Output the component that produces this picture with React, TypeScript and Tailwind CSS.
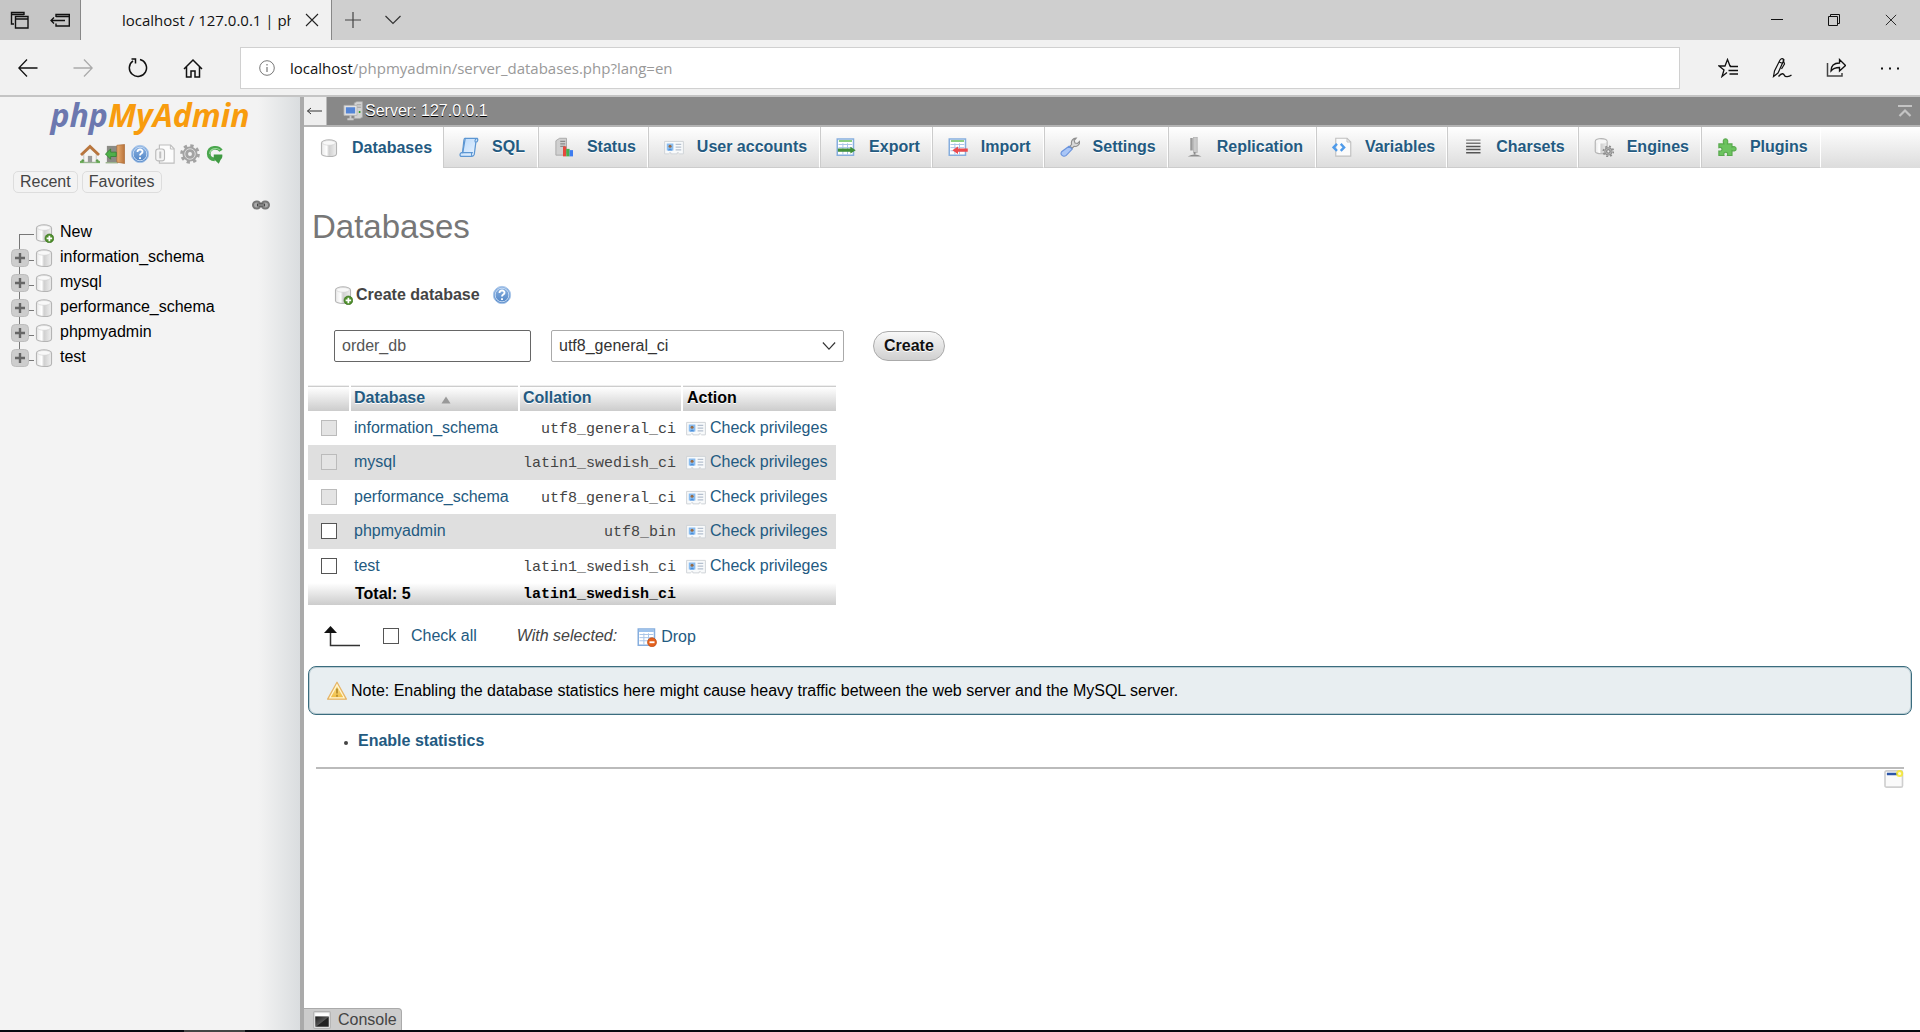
import React, { useState } from "react";

type IconProps = { className?: string };

function Svg({ className = "size-5", children, box = "0 0 16 16" }: { className?: string; children: React.ReactNode; box?: string }) {
  return (
    <svg viewBox={box} className={`${className} shrink-0`} fill="none" aria-hidden="true">
      {children}
    </svg>
  );
}

/* ---------- shared gradients ---------- */

function Gradients() {
  return (
    <svg className="absolute size-0" aria-hidden="true">
      <defs>
        <linearGradient id="cyl" x1="0" x2="1" y1="0" y2="0">
          <stop offset="0" stopColor="#e8e8e8" />
          <stop offset="0.35" stopColor="#ffffff" />
          <stop offset="0.5" stopColor="#cfcfcf" />
          <stop offset="0.7" stopColor="#dcdcdc" />
          <stop offset="1" stopColor="#f0f0f0" />
        </linearGradient>
        <linearGradient id="help" x1="0" x2="0" y1="0" y2="1">
          <stop offset="0" stopColor="#8fb5e3" />
          <stop offset="1" stopColor="#4d82c4" />
        </linearGradient>
        <linearGradient id="door" x1="0" x2="1" y1="0" y2="0">
          <stop offset="0" stopColor="#e9ad72" />
          <stop offset="1" stopColor="#b8733a" />
        </linearGradient>
        <linearGradient id="warn" x1="0" x2="0" y1="0" y2="1">
          <stop offset="0" stopColor="#fbe9a0" />
          <stop offset="1" stopColor="#f0b93a" />
        </linearGradient>
        <linearGradient id="scroll" x1="0" x2="1" y1="0" y2="1">
          <stop offset="0" stopColor="#b9d9fb" />
          <stop offset="1" stopColor="#eaf4ff" />
        </linearGradient>
        <linearGradient id="term" x1="0" x2="1" y1="0" y2="1">
          <stop offset="0" stopColor="#1c1c1c" />
          <stop offset="0.5" stopColor="#555555" />
          <stop offset="0.55" stopColor="#222222" />
          <stop offset="1" stopColor="#222222" />
        </linearGradient>
      </defs>
    </svg>
  );
}

/* ---------- browser icons ---------- */

const TabsAsideIcon = () => (
  <Svg className="size-5" box="0 0 20 20">
    <path d="M4 14H1.5V2.5H14V5M1.5 4.5H14" stroke="#111" strokeWidth="1.4" />
    <path d="M5.5 6.5H18V18H5.5ZM5.5 9H18" stroke="#111" strokeWidth="1.4" />
  </Svg>
);
const SetAsideIcon = () => (
  <Svg className="size-5" box="0 0 20 20">
    <path d="M6 7V4.500H19.300V16H6V13.500M6 6.500H19.300" stroke="#111" strokeWidth="1.4" />
    <path d="M15 10.500H1M4 7.500L1 10.500L4 13.500" stroke="#111" strokeWidth="1.3" />
  </Svg>
);
const CloseIcon = ({ className = "size-3.5" }: IconProps) => (
  <Svg className={className} box="0 0 14 14">
    <path d="M1 1L13 13M13 1L1 13" stroke="#222" strokeWidth="1.1" />
  </Svg>
);
const PlusIcon = () => (
  <Svg className="size-4">
    <path d="M8 0V16M0 8H16" stroke="#444" strokeWidth="1.2" />
  </Svg>
);
const ChevronIcon = () => (
  <Svg className="size-4">
    <path d="M0.500 4L8 11.500L15.500 4" stroke="#333" strokeWidth="1.2" />
  </Svg>
);
const ArrowLeft = () => (
  <Svg box="0 0 20 20">
    <path d="M19.500 10H1M9 1.500L0.800 10L9 18.500" stroke="#111" strokeWidth="1.3" />
  </Svg>
);
const ArrowRight = () => (
  <Svg box="0 0 20 20">
    <path d="M0.500 10H19M11 1.500L19.200 10L11 18.500" stroke="#aaa" strokeWidth="1.3" />
  </Svg>
);
const ReloadIcon = () => (
  <Svg box="0 0 20 20">
    <path d="M12 1.500A8.600 8.600 0 1 1 5 2.800" stroke="#111" strokeWidth="1.5" />
    <path d="M3.500 1H7.500V5.500" stroke="#111" strokeWidth="1.5" />
  </Svg>
);
const HomeIcon = () => (
  <Svg box="0 0 20 20">
    <path d="M1 11L10 2L19 11M3.500 9V19H8V13H12V19H16.500V9" stroke="#111" strokeWidth="1.5" />
  </Svg>
);
const InfoIcon = () => (
  <Svg className="size-4">
    <circle cx="8" cy="8" r="7.300" stroke="#777" strokeWidth="1" />
    <path d="M8 7V12M8 4V5.500" stroke="#777" strokeWidth="1.2" />
  </Svg>
);
const FavoritesIcon = () => (
  <Svg box="0 0 20 20">
    <path d="M13 8H12L9.500 1.500L7 8H1L6 12L4 18.500L9 14.500" stroke="#111" strokeWidth="1.3" />
    <path d="M12 8.500H20M10.500 12.500H20M11.500 16H20" stroke="#111" strokeWidth="1.3" />
  </Svg>
);
const PenIcon = () => (
  <Svg box="0 0 20 20">
    <path d="M1.500 18.500L2.500 13L8 2Q10-.5 12 1.800L6 15ZM7 4L11 5.500M11 1.500L12.500 6L9.500 11" stroke="#111" strokeWidth="1.2" />
    <path d="M6.500 18.500C10 14 12 16 12.500 17.500S17 19 19.500 17" stroke="#111" strokeWidth="1.3" />
  </Svg>
);
const ShareIcon = () => (
  <Svg box="0 0 20 20">
    <path d="M1.500 5V18H16V15" stroke="#444" strokeWidth="1.5" />
    <path d="M5 13C5 8 8 5 13.500 5V1.500L19.500 7.500L13.500 13V9.500C10 9.500 7 10.500 5 13Z" stroke="#111" strokeWidth="1.3" />
  </Svg>
);
const DotsIcon = () => (
  <Svg box="0 0 20 20">
    <path d="M1 9.500h2v2h-2zM9 9.500h2v2h-2zM17 9.500h2v2h-2z" fill="#111" />
  </Svg>
);

/* ---------- phpMyAdmin icons ---------- */

const Cylinder = () => (
  <g>
    <path d="M2 4C2 .7 14 .7 14 4V12.500C14 15.600 2 15.600 2 12.500Z" fill="url(#cyl)" stroke="#b4b4b4" strokeWidth="0.9" />
    <ellipse cx="8" cy="3.900" rx="5.300" ry="1.900" fill="#f8f8f8" stroke="#d0d0d0" strokeWidth="0.500" />
  </g>
);

const DbIcon = ({ className }: IconProps) => (
  <Svg className={className}>
    <Cylinder />
  </Svg>
);
const DbAddIcon = ({ className }: IconProps) => (
  <Svg className={className}>
    <Cylinder />
    <circle cx="12.300" cy="12.300" r="3.500" fill="#4f8f2c" stroke="#376e1c" strokeWidth="0.500" />
    <path d="M12.300 10.100V14.500M10.100 12.300H14.500" stroke="#fff" strokeWidth="1.400" />
  </Svg>
);
const Gear = ({ x = 8, y = 8, r = 5, color = "#a3a3a3" }: { x?: number; y?: number; r?: number; color?: string }) => (
  <g>
    <circle cx={x} cy={y} r={r + 1} stroke={color} strokeWidth={r * 0.45} strokeDasharray={`${(r + 1) * 0.393} ${(r + 1) * 0.393}`} />
    <circle cx={x} cy={y} r={r * 0.68} stroke={color} strokeWidth={r * 0.8} />
    <circle cx={x} cy={y} r={r * 0.75} stroke="#dcdcdc" strokeWidth={r * 0.14} />
  </g>
);
const EngineIcon = () => (
  <Svg>
    <path d="M1 3.500C1 .5 10.500.5 10.500 3.500V11.500C10.500 14 1 14 1 11.500Z" fill="url(#cyl)" stroke="#b4b4b4" strokeWidth="0.900" />
    <ellipse cx="5.750" cy="3.500" rx="4.200" ry="1.600" fill="#f7f7f7" />
    <circle cx="11.500" cy="11.500" r="2" fill="#eee" />
    <Gear x={11.5} y={11.5} r={3} color="#8c8c8c" />
  </Svg>
);
const SqlIcon = () => (
  <Svg>
    <path d="M5 1H14.500C15.500 2 15 4 13.500 4.200L12.200 14C12 15 11 15.500 10 15.500H1.500C.5 15 .5 13 2 12.500H3Z" fill="url(#scroll)" stroke="#5c96d2" strokeWidth="1" />
    <path d="M5 1C4.500 1 4 1.500 3.900 2.500L2.800 12.500H10.500C9.500 14 10 15.500 11 15.200" stroke="#5c96d2" strokeWidth="0.900" />
    <path d="M13.500 4.200C12.500 4 12.500 2 13.800 1.600" stroke="#5c96d2" strokeWidth="0.900" />
  </Svg>
);
const StatusIcon = () => (
  <Svg>
    <path d="M1.500 3L4.500 1H10V13L7.500 14.500H1.500Z" fill="#d0d0d0" stroke="#a5a5a5" strokeWidth="0.700" />
    <path d="M5 3.500H9M5 5.500H9M5 7.500H9" stroke="#8a8a8a" strokeWidth="0.900" />
    <path d="M7.200 7.500h2.600v8h-2.600z" fill="#e6493c" />
    <path d="M9.800 9.500h2.700v6h-2.700z" fill="#47ae4c" />
    <path d="M12.500 10.500h2.700v5h-2.700z" fill="#3d7cf0" />
  </Svg>
);
const CardIcon = ({ className }: IconProps) => (
  <Svg className={className}>
    <path d="M.5 3.500H15.500V13.500H12.500L11.500 12.600H10.500V13.500H5.500V12.600H4.500L3.500 13.500H.5Z" fill="#f8fafb" stroke="#d0d4d8" strokeWidth="0.800" />
    <path d="M2.200 5.200h5.300v5.600h-5.300z" fill="#8abdf0" />
    <path d="M3 10.800Q4.800 7.500 6.700 10.800Z" fill="#4a8fdb" />
    <circle cx="4.850" cy="7.300" r="1.200" fill="#9a6a42" />
    <path d="M9.300 5.800H13.800M9.300 8H13.800M9.300 10.200H13.800" stroke="#b4c0cf" strokeWidth="1" />
  </Svg>
);
const Sheet = () => (
  <g>
    <path d="M1 1.500h13v13h-13z" fill="#fff" stroke="#86aede" strokeWidth="1.200" />
    <path d="M2.300 3.200H12.800" stroke="#8ccf80" strokeWidth="1.600" />
    <path d="M2 6H13M2 8.500H13M2 11H13M5.500 5V14M9.200 5V14" stroke="#abc6e8" strokeWidth="0.800" />
  </g>
);
const ExportIcon = () => (
  <Svg>
    <Sheet />
    <path d="M1.500 9.200H11.500V7.800L15.800 10.500L11.500 13.200V11.800H1.500Z" fill="#3f8f3a" />
  </Svg>
);
const ImportIcon = () => (
  <Svg>
    <Sheet />
    <path d="M15.800 9.200H8V7.500L3.500 10.500L8 13.500V11.800H15.800Z" fill="#ec4a4e" />
  </Svg>
);
const DropIcon = () => (
  <Svg>
    <Sheet />
    <path d="M1.500 2h12v2h-12z" fill="#9dc2ec" />
    <circle cx="12" cy="12.200" r="3.600" fill="#e4601c" stroke="#b9440c" strokeWidth="0.500" />
    <path d="M10 12.200H14" stroke="#fff" strokeWidth="1.500" />
  </Svg>
);
const WrenchIcon = () => (
  <Svg>
    <path d="M8 7.500L9.300 5.800C8.500 3 10.500.8 13 .9L11.300 2.800L12 4.800L14 5.200L15.700 3.500C16 6.200 13.500 8 11.200 7.500L9.800 9Z" fill="#d9d9d9" stroke="#8f8f8f" strokeWidth="0.900" />
    <path d="M7.200 7.400L9.800 9.700L5 14.700C2.500 16.500-.2 14 1.300 11.800Z" fill="#a9c6f7" stroke="#6a93dc" strokeWidth="0.900" />
  </Svg>
);
const ReplicationIcon = () => (
  <Svg>
    <path d="M5 .8h2v10h-2z" fill="#9a9a9a" />
    <path d="M7.600 0h3v12.500h-3z" fill="#cacaca" stroke="#a5a5a5" strokeWidth="0.500" />
    <path d="M8.500 12V14" stroke="#8c8c8c" strokeWidth="1.400" />
    <path d="M3 15.500Q8.500 12.500 14 15.500Z" fill="#8c8c8c" />
  </Svg>
);
const VariablesIcon = () => (
  <Svg>
    <path d="M3 1H12L15 4V15.300H3Z" fill="#fbfbfb" stroke="#c0c0c0" strokeWidth="0.900" />
    <path d="M12 1V4H15" stroke="#c0c0c0" strokeWidth="0.800" />
    <path d="M4 5.500L1.300 8.300L4 11.100M7 5.500L9.700 8.300L7 11.100" stroke="#4f9bea" strokeWidth="1.900" />
  </Svg>
);
const CharsetsIcon = () => (
  <Svg>
    <path d="M2.500 2.500H14" stroke="#999" strokeWidth="1.200" />
    <path d="M2.500 5H14" stroke="#777" strokeWidth="1.200" />
    <path d="M2.500 7.500H14M2.500 10H14M2.500 12.500H14" stroke="#555" strokeWidth="1.200" />
  </Svg>
);
const PuzzleIcon = () => (
  <Svg>
    <path
      d="M1.500 5.500H5.500C4.500 3.500 5 1.500 6.800 1.500S9 3.500 8.300 5.500H12V8.200C13.500 7.300 15.300 7.800 15.300 9.500S13.500 11.500 12 10.800V14.800H8.300C9 13.200 8.300 12.200 7 12.200S5 13.200 5.600 14.800H1.500V11.200C3.200 11.600 4 10.800 4 9.700S3 8 1.500 8.500Z"
      fill="#6cc35f"
      stroke="#58a94d"
      strokeWidth="0.900"
    />
  </Svg>
);
const ServerIcon = () => (
  <Svg>
    <path d="M9 1.500L11 .5H15.500V13L13.500 14H9Z" fill="#d2d2d2" stroke="#a9a9a9" strokeWidth="0.600" />
    <path d="M11 3H14.500M11 5H14.500" stroke="#9a9a9a" strokeWidth="0.700" />
    <path d="M13.300 8v1.600" stroke="#35a12c" strokeWidth="1.300" />
    <path d="M.8 3.500h10.400v8h-10.400z" fill="#e2e2e2" stroke="#b5b5b5" strokeWidth="0.700" />
    <path d="M2.300 5h7.400v5h-7.400z" fill="#5485d6" />
    <path d="M6 11.500V14M3.500 14.600H8.500" stroke="#c9c9c9" strokeWidth="1.500" />
  </Svg>
);
const HelpIcon = ({ className }: IconProps) => (
  <Svg className={className}>
    <circle cx="8" cy="8" r="6.900" fill="url(#help)" stroke="#a9c6ea" strokeWidth="0.800" />
    <circle cx="8" cy="8" r="5.500" stroke="#c9ddf5" strokeWidth="0.800" />
    <path d="M6 6.300C6 3.700 10.200 3.900 10 6.300C9.900 7.700 8 7.600 8 9.200M8 10.600V12" stroke="#fff" strokeWidth="1.500" />
  </Svg>
);
const PmaHomeIcon = () => (
  <Svg>
    <path d="M0 13.500h16v1.800h-16z" fill="#6fae5c" />
    <path d="M3 8L8 3.500L13 8V14.500H3Z" fill="#f5f5f2" stroke="#aaa" strokeWidth="0.500" />
    <path d="M6.300 9.500h3.400v5h-3.400z" fill="#9a9a9a" />
    <path d="M.8 8.800L8 2L15.200 8.800" stroke="#b9763d" strokeWidth="2.300" />
    <path d="M1 14C1 11.500 3.500 11.500 3.500 14M12.500 14C12.500 11.500 15 11.500 15 14" fill="#5b9a4b" />
  </Svg>
);
const ExitIcon = () => (
  <Svg>
    <path d="M1.500 1.500h9v13h-9z" fill="#8b8b85" />
    <path d="M.5 14.500h10v1h-10z" fill="#8ea87e" />
    <path d="M9.500 1L15.700.4V15.600L9.500 14.500Z" fill="url(#door)" stroke="#a5652f" strokeWidth="0.500" />
    <path d="M.3 8L4.500 4V6.500H9V10H4.500V12.200Z" fill="#4fb04a" stroke="#2f7f2e" strokeWidth="0.600" />
  </Svg>
);
const DocIcon = () => (
  <Svg>
    <path d="M3.500.8H12.500L15.300 3.800V15.300H3.500Z" fill="#fcfcfc" stroke="#bdbdbd" strokeWidth="0.900" />
    <path d="M12.300.8V4H15.300" stroke="#bdbdbd" strokeWidth="0.800" />
    <rect x="0.600" y="4" width="7" height="9.500" rx="2" fill="#f4f4f4" stroke="#b9b9b9" strokeWidth="0.900" />
    <path d="M4.200 6v5.500" stroke="#c0c0c0" strokeWidth="1.600" />
  </Svg>
);
const GearIcon = () => (
  <Svg>
    <Gear r={5.6} />
  </Svg>
);
const RefreshIcon = () => (
  <Svg>
    <path d="M12.800 5.400C11 2.200 3.200 1.800 3 7.800C3 10.600 5 12.300 7.800 12.300" stroke="#4aa64d" strokeWidth="3" />
    <path d="M7 8.300H13.800C14.200 10 13.600 11.500 12.500 12.500L11 15.800L7 12Z" fill="#3f9a42" />
    <path d="M11.800 4.700C9.500 2.600 3.800 3.500 3.700 8" stroke="#97d698" strokeWidth="0.900" />
  </Svg>
);
const LinkIcon = () => (
  <Svg className="h-3 w-[18px]" box="0 0 18 12">
    <rect x="1" y="2.500" width="7.500" height="7" rx="3.500" fill="#aaa" stroke="#777" strokeWidth="2" />
    <rect x="9.500" y="2.500" width="7.500" height="7" rx="3.500" fill="#aaa" stroke="#777" strokeWidth="2" />
    <path d="M5 6H13" stroke="#444" strokeWidth="2.800" />
    <path d="M6 6H12" stroke="#bbb" strokeWidth="1" />
  </Svg>
);
const WarningIcon = () => (
  <Svg>
    <path d="M8 1L15.500 14.500H.5Z" fill="url(#warn)" stroke="#e6b468" strokeWidth="1" strokeLinejoin="round" />
    <path d="M8 3.200L13.800 13.500H2.200Z" stroke="#fff6d8" strokeWidth="0.900" />
    <path d="M8 6V10M8 11V12.500" stroke="#b99030" strokeWidth="1.500" />
  </Svg>
);
const TerminalIcon = () => (
  <Svg className="size-[18px]">
    <rect x="0.600" y="0.600" width="14.800" height="14.800" rx="1" fill="#e9e9e9" stroke="#b2b2b2" strokeWidth="1" />
    <path d="M2 2h12v2.800h-12z" fill="#fff" />
    <path d="M2 4.800h12v9.200h-12z" fill="url(#term)" />
  </Svg>
);
const WindowNewIcon = () => (
  <Svg>
    <rect x="0.800" y="1.500" width="14" height="13" rx="1.200" fill="#fafafa" stroke="#cfcfcf" strokeWidth="1.300" />
    <path d="M2.300 4H11" stroke="#2b55a8" strokeWidth="2" />
    <circle cx="12.500" cy="3.500" r="2.800" fill="#f7e92c" fillOpacity="0.850" />
    <circle cx="12.500" cy="3.500" r="1.200" fill="#fffbd0" />
  </Svg>
);
const PlusBox = () => (
  <Svg className="size-[18px]" box="0 0 18 18">
    <rect x="0.500" y="0.500" width="17" height="17" rx="4" fill="#cdcdcd" stroke="#bdbdbd" />
    <path d="M9 4V14M4 9H14" stroke="#666" strokeWidth="2.400" />
  </Svg>
);

/* ---------- data ---------- */

const TABS: { label: string; icon: React.ReactNode }[] = [
  { label: "Databases", icon: <DbIcon /> },
  { label: "SQL", icon: <SqlIcon /> },
  { label: "Status", icon: <StatusIcon /> },
  { label: "User accounts", icon: <CardIcon /> },
  { label: "Export", icon: <ExportIcon /> },
  { label: "Import", icon: <ImportIcon /> },
  { label: "Settings", icon: <WrenchIcon /> },
  { label: "Replication", icon: <ReplicationIcon /> },
  { label: "Variables", icon: <VariablesIcon /> },
  { label: "Charsets", icon: <CharsetsIcon /> },
  { label: "Engines", icon: <EngineIcon /> },
  { label: "Plugins", icon: <PuzzleIcon /> },
];

const DATABASES = [
  { name: "information_schema", collation: "utf8_general_ci", locked: true },
  { name: "mysql", collation: "latin1_swedish_ci", locked: true },
  { name: "performance_schema", collation: "utf8_general_ci", locked: true },
  { name: "phpmyadmin", collation: "utf8_bin", locked: false },
  { name: "test", collation: "latin1_swedish_ci", locked: false },
];

const SHORTCUTS = [
  { label: "Home", icon: <PmaHomeIcon /> },
  { label: "Log out", icon: <ExitIcon /> },
  { label: "phpMyAdmin documentation", icon: <HelpIcon /> },
  { label: "Documentation", icon: <DocIcon /> },
  { label: "Navigation panel settings", icon: <GearIcon /> },
  { label: "Reload navigation panel", icon: <RefreshIcon /> },
];

const checkboxClass =
  "block size-4 appearance-none border border-[#555] bg-white checked:bg-[#235a81] disabled:border-[#bbb] disabled:bg-[#e4e4e4]";

/* ---------- browser chrome ---------- */

function TitleBar() {
  return (
    <div className="flex h-10 items-stretch bg-[#cfcfcf]">
      <div className="flex w-20 items-center gap-5 bg-[#c6c6c6] pl-2.5">
        <button aria-label="Tabs you've set aside"><TabsAsideIcon /></button>
        <button aria-label="Set these tabs aside"><SetAsideIcon /></button>
      </div>
      <div className="flex w-[252px] items-center gap-3.5 border-x border-[#888] bg-[#f1f1f1] pl-[41px]">
        <span className="w-[169px] overflow-hidden text-[15px] whitespace-nowrap text-[#111]">localhost / 127.0.0.1 | phpMyAdmin</span>
        <button aria-label="Close tab"><CloseIcon /></button>
      </div>
      <div className="flex items-center gap-6 pl-[13px]">
        <button aria-label="New tab"><PlusIcon /></button>
        <button aria-label="Show tab previews"><ChevronIcon /></button>
      </div>
      <div className="ml-auto flex items-center gap-[45px] pr-[23px]">
        <button aria-label="Minimize">
          <Svg className="size-3" box="0 0 12 12"><path d="M0 5.500H12" stroke="#111" /></Svg>
        </button>
        <button aria-label="Restore">
          <Svg className="size-3" box="0 0 12 12"><path d="M.5 2.500h9v9h-9zM2.500 2.500V.5h9v9h-2" stroke="#111" /></Svg>
        </button>
        <button aria-label="Close window"><CloseIcon className="size-3" /></button>
      </div>
    </div>
  );
}

function AddressBar() {
  return (
    <div className="flex h-[57px] items-center border-b-2 border-[#c4c4c4] bg-[#f1f1f1]">
      <div className="flex w-60 items-center gap-[35px] pl-[18px]">
        <button aria-label="Back"><ArrowLeft /></button>
        <button aria-label="Forward"><ArrowRight /></button>
        <button aria-label="Refresh"><ReloadIcon /></button>
        <button aria-label="Home"><HomeIcon /></button>
      </div>
      <div className="flex h-[42px] flex-1 items-center gap-[15px] border border-[#d0d0d0] bg-white pl-[18px] text-[15px]">
        <InfoIcon />
        <span className="whitespace-nowrap text-[#999]">
          <span className="text-[#111]">localhost</span>/phpmyadmin/server_databases.php?lang=en
        </span>
      </div>
      <div className="flex w-60 items-center gap-[34px] pl-[38px]">
        <button aria-label="Favorites"><FavoritesIcon /></button>
        <button aria-label="Add notes"><PenIcon /></button>
        <button aria-label="Share"><ShareIcon /></button>
        <button aria-label="More"><DotsIcon /></button>
      </div>
    </div>
  );
}

/* ---------- navigation panel ---------- */

function Sidebar() {
  return (
    <aside className="flex w-[304px] shrink-0 flex-col border-r-4 border-[#aaa] bg-[linear-gradient(to_right,#f3f3f3_86%,#dadddf)]">
      <a href="#home" className="text-center font-['Open_Sans',sans-serif] text-[32px] leading-9 font-bold text-[#6c78af] italic">
        php<span className="text-[#f89c0e]">MyAdmin</span>
      </a>
      <nav className="mt-[11px] flex gap-[5px] pl-20">
        {SHORTCUTS.map((s) => (
          <a key={s.label} href="#nav" aria-label={s.label}>{s.icon}</a>
        ))}
      </nav>
      <div className="mt-[7px] flex gap-1 pl-[13px] leading-5 text-[#444]">
        <button className="rounded-[5px] border border-[#ddd] px-1.5">Recent</button>
        <button className="rounded-[5px] border border-[#ddd] px-1.5">Favorites</button>
      </div>
      <button aria-label="Unlink from main panel" className="mt-1.5 mr-[30px] self-end"><LinkIcon /></button>
      <ul className="mt-2 ml-[11px] text-black">
        <li className="flex h-[25px] items-center">
          <span className="mt-[3px] ml-2 h-[22px] w-[15px] translate-y-3 border-t border-l border-[#777]" />
          <span className="flex items-center gap-1.5">
            <span className="pt-0.5"><DbAddIcon /></span>
            <a href="#new">New</a>
          </span>
        </li>
        {DATABASES.map((db, i) => (
          <li key={db.name} className="relative flex h-[25px] items-center">
            <span className={i < DATABASES.length - 1 ? "absolute top-3 left-2 h-[25px] border-l border-[#777]" : "hidden"} />
            <button aria-label={`Expand ${db.name}`} className="relative pt-0.5"><PlusBox /></button>
            <span className="mt-2 w-[5px] border-t border-[#777]" />
            <span className="pt-0.5"><DbIcon /></span>
            <a href="#db" className="pl-1.5">{db.name}</a>
          </li>
        ))}
      </ul>
    </aside>
  );
}

/* ---------- main panel ---------- */

function ServerBar() {
  return (
    <div className="flex h-[30px] items-stretch border-b-2 border-[#b4b4b4] bg-[#888]">
      <button aria-label="Hide panel" className="w-[23px] border-r border-[#bbb] bg-[#eee] pl-0.5">
        <Svg className="h-3 w-4" box="0 0 16 12"><path d="M16 6H1.500M5 3L1.500 6L5 9" stroke="#333" strokeWidth="1" /></Svg>
      </button>
      <a href="#server" className="flex items-center gap-0.5 pl-4 text-white [text-shadow:0_1px_0_#000]">
        <ServerIcon />
        Server: 127.0.0.1
      </a>
      <button aria-label="Scroll to top" className="mr-2 ml-auto">
        <Svg className="size-3.5" box="0 0 14 14"><path d="M0 2H14M1.500 12L7 6.500L12.500 12" stroke="#c4c4c4" strokeWidth="2.200" /></Svg>
      </button>
    </div>
  );
}

function TopMenu() {
  return (
    <nav className="flex h-[41px] bg-[linear-gradient(#ffffff,#dcdcdc)]">
      {TABS.map((tab, i) => (
        <a
          key={tab.label}
          href="#tab"
          className={
            i === 0
              ? "flex items-center gap-[13px] bg-white pr-[11px] pl-[15px] font-bold text-[#235a81]"
              : "flex items-center gap-[13px] border-r border-b border-l border-r-white border-b-[#ccc] border-l-[#ccc] pr-[11px] pl-[15px] font-bold whitespace-nowrap text-[#235a81] [text-shadow:0_1px_0_#fff] even:pr-3"
          }
        >
          {tab.icon}
          {tab.label}
        </a>
      ))}
    </nav>
  );
}

function CreateForm() {
  const [name, setName] = useState("order_db");
  return (
    <form className="ml-[25px]" onSubmit={(e) => e.preventDefault()}>
      <div className="flex items-center">
        <DbAddIcon />
        <label htmlFor="new-db" className="pl-[3px] font-bold text-[#444]">Create database</label>
        <a href="#help" aria-label="Documentation" className="ml-3"><HelpIcon /></a>
      </div>
      <div className="mt-[25px] flex items-center pl-px">
        <input
          id="new-db"
          value={name}
          onChange={(e) => setName(e.target.value)}
          className="h-8 w-[197px] rounded-xs border border-[#666] bg-white px-[7px] text-[#555]"
        />
        <span className="relative ml-5 flex items-center">
          <select aria-label="Collation" className="h-8 w-[293px] appearance-none rounded-xs border border-[#aaa] bg-white px-[7px] text-[#333]">
            <option>utf8_general_ci</option>
            <option>latin1_swedish_ci</option>
            <option>utf8_bin</option>
          </select>
          <span className="pointer-events-none absolute right-2"><Svg className="size-3.5"><path d="M1 4L8 11.500L15 4" stroke="#333" strokeWidth="1.300" /></Svg></span>
        </span>
        <button className="ml-[29px] h-[30px] rounded-full border border-[#aaa] bg-[linear-gradient(#f8f8f8,#d0d0d0)] px-2.5 font-bold text-[#111] [text-shadow:0_1px_0_#fff]">
          Create
        </button>
      </div>
    </form>
  );
}

function DatabaseTable() {
  return (
    <table className="mt-[23px] h-[220px] w-[528px] table-fixed border-collapse text-left">
      <colgroup>
        <col className="w-[42px]" />
        <col className="w-[169px]" />
        <col className="w-[163px]" />
        <col className="w-[154px]" />
      </colgroup>
      <thead>
        <tr className="h-[25px] border-t border-[#eee] bg-[linear-gradient(#ffffff,#cccccc)] [text-shadow:0_1px_0_#fff]">
          <th aria-label="Select" className="border-r-2 border-white" />
          <th className="border-r-2 border-white pl-[3px] text-[#235a81]">
            <a href="#sort" className="flex items-center gap-4">
              Database
              <Svg className="mt-1 h-2 w-2.5" box="0 0 10 8"><path d="M5 .5L9.500 7.500H.5Z" fill="#999" /></Svg>
            </a>
          </th>
          <th className="border-r-2 border-white pl-[3px] text-[#235a81]"><a href="#sort">Collation</a></th>
          <th className="pl-1 text-black">Action</th>
        </tr>
      </thead>
      <tbody>
        {DATABASES.map((db) => (
          <tr key={db.name} className="even:bg-[#dfdfdf]">
            <td className="pl-[13px]"><input type="checkbox" disabled={db.locked} aria-label={`Select ${db.name}`} className={checkboxClass} /></td>
            <td className="pl-1 text-[#235a81]"><a href="#db">{db.name}</a></td>
            <td className="pt-1 pr-[6px] text-right font-['Liberation_Mono',monospace] text-[15px] text-[#444]">{db.collation}</td>
            <td className="pl-1 text-[#235a81]">
              <a href="#privileges" className="flex items-center gap-1 whitespace-nowrap"><CardIcon />Check privileges</a>
            </td>
          </tr>
        ))}
      </tbody>
      <tfoot>
        <tr className="h-[22px] bg-[linear-gradient(#ffffff,#cccccc)] leading-5 text-black">
          <th />
          <th className="pl-[5px]">Total: 5</th>
          <th className="pt-0.5 pr-[6px] text-right font-['Liberation_Mono',monospace] text-[15px]">latin1_swedish_ci</th>
          <th />
        </tr>
      </tfoot>
    </table>
  );
}

function BulkActions() {
  return (
    <div className="mt-[19px] flex h-6 items-center pl-4 text-[#235a81]">
      <Svg className="h-[22px] w-9" box="0 0 36 22">
        <path d="M6.500 5V20.500H36" stroke="#333" strokeWidth="1.500" />
        <path d="M0 8L6.500 1L13 8Z" fill="#111" />
      </Svg>
      <input id="check-all" type="checkbox" className={`${checkboxClass} ml-[23px]`} />
      <label htmlFor="check-all" className="ml-3">Check all</label>
      <span className="ml-10 text-[#444] italic">With selected:</span>
      <button className="ml-5 flex items-center gap-1 pt-0.5"><DropIcon />Drop</button>
    </div>
  );
}

export default function App() {
  return (
    <div className="flex h-screen flex-col overflow-hidden bg-white font-['Liberation_Sans',Arial,sans-serif] text-base leading-5">
      <Gradients />
      <header className="font-['Open_Sans','Noto_Sans',sans-serif]">
        <TitleBar />
        <AddressBar />
      </header>
      <div className="flex min-h-0 flex-1">
        <Sidebar />
        <main className="flex min-w-0 flex-1 flex-col">
          <ServerBar />
          <TopMenu />
          <section className="pr-2 pl-1">
            <h2 className="mt-[41px] mb-10 pl-1 text-[33px] leading-9 text-[#777]">Databases</h2>
            <CreateForm />
            <DatabaseTable />
            <BulkActions />
            <div className="mt-[18px] flex h-[49px] items-center gap-1 rounded-lg border border-[#3a6c7e] bg-[#e8eef1] pl-[18px] text-black inset-shadow-[0_0_0_1px_#b9cbd2]">
              <WarningIcon />
              Note: Enabling the database statistics here might cause heavy traffic between the web server and the MySQL server.
            </div>
            <ul className="mt-4 list-disc pl-[50px] text-[#444] marker:text-xs">
              <li><a href="#stats" className="font-bold text-[#235a81]">Enable statistics</a></li>
            </ul>
            <hr className="mx-2 mt-4 border-t-2 border-[#bbb]" />
            <div className="flex justify-end pr-2">
              <a href="#window" aria-label="Open new phpMyAdmin window"><WindowNewIcon /></a>
            </div>
          </section>
          <button className="mt-auto flex h-[22px] items-center gap-[7px] self-start rounded-tr border-t border-r border-[#aaa] bg-[#ccc] pt-px pr-1 pl-[9px] text-[#444]">
            <TerminalIcon />
            Console
          </button>
        </main>
      </div>
      <div className="flex h-0.5 bg-[#07090f] pl-[184px]">
        <div className="w-[61px] bg-[#444]" />
      </div>
    </div>
  );
}
